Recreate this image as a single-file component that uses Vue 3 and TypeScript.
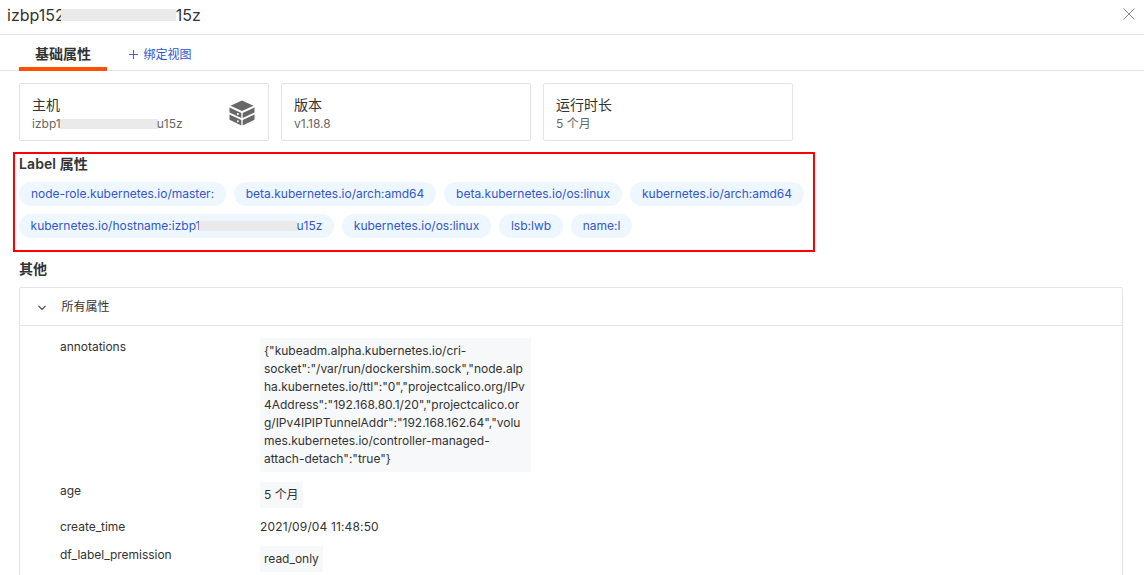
<script setup lang="ts">
interface Tag { before: string; mask?: boolean; after?: string; width: number }
interface Row { key: string; lines: string[]; boxed: boolean; kind: string }

const tags: Tag[] = [
  { before: 'node-role.kubernetes.io/master:', width: 207 },
  { before: 'beta.kubernetes.io/arch:amd64', width: 202 },
  { before: 'beta.kubernetes.io/os:linux', width: 178 },
  { before: 'kubernetes.io/arch:amd64', width: 174 },
  { before: 'kubernetes.io/hostname:izbp1', mask: true, after: 'u15z', width: 315 },
  { before: 'kubernetes.io/os:linux', width: 149 },
  { before: 'lsb:lwb', width: 64 },
  { before: 'name:l', width: 61 },
]

const rows: Row[] = [
  {
    key: 'annotations',
    boxed: true,
    kind: 'tall',
    lines: [
      '{"kubeadm.alpha.kubernetes.io/cri-',
      'socket":"/var/run/dockershim.sock","node.alp',
      'ha.kubernetes.io/ttl":"0","projectcalico.org/IPv',
      '4Address":"192.168.80.1/20","projectcalico.or',
      'g/IPv4IPIPTunnelAddr":"192.168.162.64","volu',
      'mes.kubernetes.io/controller-managed-',
      'attach-detach":"true"}',
    ],
  },
  { key: 'age', boxed: true, kind: 'short', lines: ['5 个月'] },
  { key: 'create_time', boxed: false, kind: 'plain', lines: ['2021/09/04 11:48:50'] },
  { key: 'df_label_premission', boxed: true, kind: 'short', lines: ['read_only'] },
]
</script>

<template>
  <div class="page">
    <header class="head">
      <div class="title">izbp152<i class="mask mask-title"></i>15z</div>
      <svg class="close" width="12" height="12" viewBox="0 0 12 12"><path d="M.5.5l11 11M11.5.5l-11 11" /></svg>
    </header>
    <nav class="tabs">
      <div class="tab active">基础属性</div>
      <div class="bind">
        <svg width="9" height="9" viewBox="0 0 9 9"><path d="M4.5 0v9M0 4.5h9" /></svg>
        <span>绑定视图</span>
      </div>
    </nav>
    <section class="cards">
      <div class="card">
        <div>
          <div class="card-title">主机</div>
          <div class="card-sub">izbp1<i class="mask mask-card"></i>u15z</div>
        </div>
        <svg class="server" width="26" height="26" viewBox="0 0 26 26">
          <path d="M13 .4L24.500 5.800 13 11 1.500 5.800z" />
          <path d="M.5 7.500L12.300 13v5L.5 12.500z" />
          <path d="M25.500 7.500L13.700 13v5l11.800-5.500z" />
          <path d="M.5 14.500L12.300 20v5.600L.5 19.700z" />
          <path d="M25.500 14.500L13.700 20v5.600l11.800-5.900z" />
          <circle cx="8.900" cy="14" r="1" />
          <circle cx="8.900" cy="21.200" r="1" />
        </svg>
      </div>
      <div class="card">
        <div>
          <div class="card-title">版本</div>
          <div class="card-sub">v1.18.8</div>
        </div>
      </div>
      <div class="card">
        <div>
          <div class="card-title">运行时长</div>
          <div class="card-sub">5 个月</div>
        </div>
      </div>
    </section>
    <section class="labels">
      <h3>Label 属性</h3>
      <div class="tags">
        <span v-for="t in tags" :key="t.before" class="tag" :style="{ width: t.width + 'px' }">
          <span>{{ t.before }}</span><i v-if="t.mask" class="mask mask-tag"></i><span v-if="t.after">{{ t.after }}</span>
        </span>
      </div>
    </section>
    <h3 class="other">其他</h3>
    <section class="panel">
      <div class="panel-head">
        <svg width="10" height="6" viewBox="0 0 10 6"><path d="M1.500.8L5 4.400 8.500.8" /></svg>
        <span>所有属性</span>
      </div>
      <div class="rows">
        <div v-for="r in rows" :key="r.key" class="row" :class="r.kind">
          <div class="key">{{ r.key }}</div>
          <div class="value" :class="{ boxed: r.boxed }">
            <div v-for="l in r.lines" :key="l">{{ l }}</div>
          </div>
        </div>
      </div>
    </section>
  </div>
</template>

<style>
body { margin: 0; background: #fff; overflow: hidden; }
</style>
<style scoped>
.page {
  width: 1144px; height: 575px; overflow: hidden; background: #fff; color: #333;
  font: 12px/18px Inter, "Noto Sans CJK SC", sans-serif; box-sizing: border-box;
}
.page * { box-sizing: border-box; }
.head {
  height: 35px; border-bottom: 1px solid #e1e1e9; display: flex; justify-content: space-between;
  align-items: flex-start; padding: 4px 9px 0 7px;
}
.title { font-size: 16px; line-height: 23px; display: flex; white-space: nowrap; }
.mask { display: block; background: #eaeaea; flex: none; }
.mask-title { width: 115px; height: 12px; margin: 5px 0 0 -4px; }
.close { margin-top: 4px; fill: none; stroke: #8c8c8c; stroke-width: 1; }
.tabs { height: 36px; border-bottom: 1px solid #e1e1e9; display: flex; padding-left: 19px; }
.tab { width: 88px; height: 36px; border-bottom: 4px solid #ff5000; text-align: center; font-size: 14px; font-weight: 700; line-height: 38px; }
.bind { display: flex; align-items: center; color: #2f54d1; margin-left: 22px; height: 39px; gap: 5.5px; }
.bind svg { stroke: #2f54d1; stroke-width: .9; }
.cards { display: flex; gap: 12px; padding: 12px 19px 0; }
.card { width: 250px; height: 58px; border: 1px solid #e1e4e8; border-radius: 2px; display: flex; justify-content: space-between; padding: 11px 13px 0 12px; }
.card-title { font-size: 14px; line-height: 20px; }
.card-sub { color: #666; line-height: 18px; display: flex; white-space: nowrap; }
.mask-card { width: 98px; height: 10px; margin: 4px -1px 0 -1px; }
.server { fill: #686868; margin-top: 5px; }
.server circle { fill: #fff; }
.labels { width: 802px; height: 100px; margin: 11px 0 0 13px; border: 2px solid #f00; padding: 0 0 0 4px; }
h3 { margin: 0; font-size: 14px; line-height: 20px; font-weight: 600; }
.labels h3 { letter-spacing: .1px; }
.tags { display: flex; flex-wrap: wrap; gap: 8px; margin-top: 8px; }
.tag { height: 24px; border-radius: 12px; background: #eef7ff; color: #3156cf; display: flex; justify-content: center; align-items: center; white-space: nowrap; }
.mask-tag { width: 98px; height: 10px; margin: 0 -1px 1px -1px; }
.other { margin: 7px 0 0 19px; }
.panel { margin: 8px 21px 0 19px; border: 1px solid #e1e4e8; border-radius: 2px 2px 0 0; height: 320px; }
.panel-head { height: 38px; border-bottom: 1px solid #e1e4e8; display: flex; align-items: center; padding-left: 17px; gap: 14.5px; }
.panel-head svg { fill: none; stroke: #444; stroke-width: 1.200; margin-top: 2px; }
.panel-head span { padding-top: 1px; }
.rows { padding: 12px 0 0 40px; }
.row { display: flex; align-items: flex-start; }
.key { width: 200px; letter-spacing: -.03px; }
.value { white-space: nowrap; }
.boxed { background: #f7f8fa; padding: 4px; letter-spacing: -.02px; }
.tall .boxed { width: 271px; }
.tall { height: 144px; }
.short { height: 36px; }
.plain { height: 28px; }
.plain .value { letter-spacing: .14px; }
</style>
